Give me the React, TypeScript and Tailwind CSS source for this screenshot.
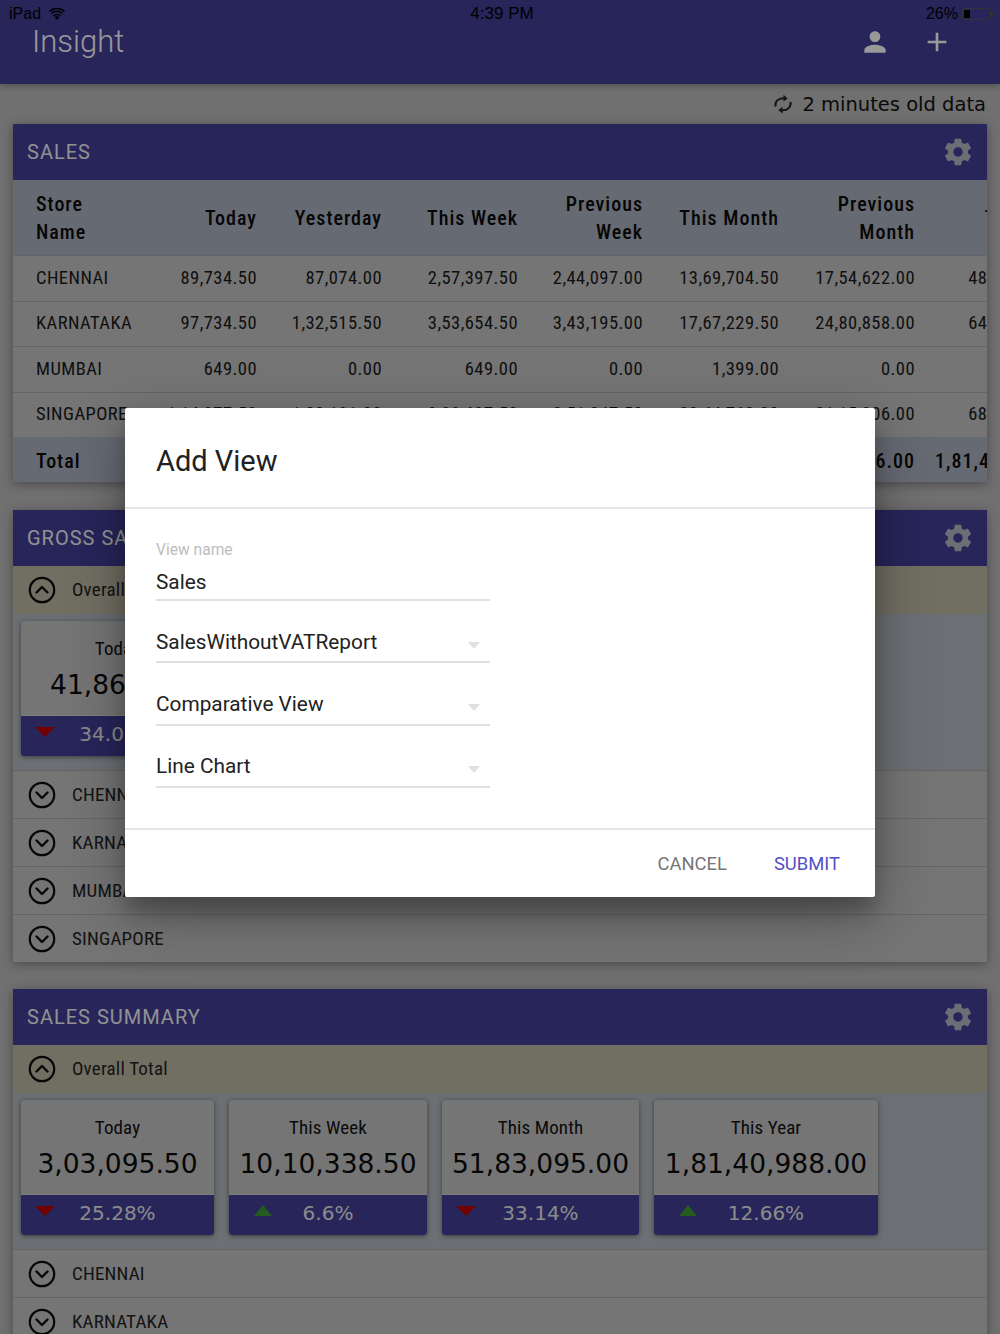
import type React from "react";

const condensed = "font-['Roboto',sans-serif] [font-stretch:75%]";
const dejavu = "font-['DejaVu_Sans',sans-serif]";

const tableCols = "grid grid-cols-[144px_100px_125px_136px_125px_136px_136px_153px]";

const tableHead = [
	"Store\nName",
	"Today",
	"Yesterday",
	"This Week",
	"Previous\nWeek",
	"This Month",
	"Previous\nMonth",
	"This Year",
];

const tableRows = [
	["CHENNAI", "89,734.50", "87,074.00", "2,57,397.50", "2,44,097.00", "13,69,704.50", "17,54,622.00", "48,03,214.00"],
	["KARNATAKA", "97,734.50", "1,32,515.50", "3,53,654.50", "3,43,195.00", "17,67,229.50", "24,80,858.00", "64,71,022.00"],
	["MUMBAI", "649.00", "0.00", "649.00", "0.00", "1,399.00", "0.00", "1,399.00"],
	["SINGAPORE", "1,14,977.50", "1,00,181.00", "3,98,637.50", "2,51,247.50", "20,44,762.00", "21,15,306.00", "68,65,353.00"],
];

const tableTotal = ["Total", "3,03,095.50", "3,19,770.50", "10,10,338.50", "8,38,539.50", "51,83,095.00", "63,50,786.00", "1,81,40,988.00"];

const summaryTiles = [
	{ label: "Today", value: "3,03,095.50", change: "25.28%", up: false },
	{ label: "This Week", value: "10,10,338.50", change: "6.6%", up: true },
	{ label: "This Month", value: "51,83,095.00", change: "33.14%", up: false },
	{ label: "This Year", value: "1,81,40,988.00", change: "12.66%", up: true },
];

const GearIcon = () => (
	<svg viewBox="0 0 24 24" className="h-8 w-8 fill-[#b2b7c3]">
		<path d="M19.43 12.98c.04-.32.07-.64.07-.98s-.03-.66-.07-.98l2.11-1.65c.19-.15.24-.42.12-.64l-2-3.46c-.12-.22-.39-.3-.61-.22l-2.49 1c-.52-.4-1.08-.73-1.69-.98l-.38-2.65C14.46 2.18 14.25 2 14 2h-4c-.25 0-.46.18-.49.42l-.38 2.65c-.61.25-1.17.59-1.69.98l-2.49-1c-.23-.09-.49 0-.61.22l-2 3.46c-.13.22-.07.49.12.64l2.11 1.65c-.04.32-.07.65-.07.98s.03.66.07.98l-2.11 1.65c-.19.15-.24.42-.12.64l2 3.46c.12.22.39.3.61.22l2.49-1c.52.4 1.08.73 1.69.98l.38 2.65c.03.24.24.42.49.42h4c.25 0 .46-.18.49-.42l.38-2.65c.61-.25 1.17-.59 1.69-.98l2.49 1c.23.09.49 0 .61-.22l2-3.46c.12-.22.07-.49-.12-.64l-2.11-1.65zM12 15.5c-1.93 0-3.5-1.57-3.5-3.5s1.57-3.5 3.5-3.5 3.5 1.57 3.5 3.5-1.57 3.5-3.5 3.5z" />
	</svg>
);

const ChevronCircle = ({ open }: { open?: boolean }) => (
	<svg viewBox="0 0 28 28" className="h-7 w-7 fill-none stroke-[#0a0a0a]">
		<circle cx="14" cy="14" r="12.2" strokeWidth="2.2" />
		<path
			d={open ? "M8.5 16.5 14 11l5.5 5.5" : "M8.5 11.5 14 17l5.5-5.5"}
			strokeWidth="2.4"
			strokeLinecap="round"
			strokeLinejoin="round"
		/>
	</svg>
);

const SectionHead = ({ title }: { title: string }) => (
	<div className="flex h-14 items-center justify-between pr-[13px] pl-[14px]">
		<span className="font-['Roboto',sans-serif] text-[20px] tracking-[1px] text-[#f2f2f2]">{title}</span>
		<GearIcon />
	</div>
);

const Tile = ({ label, value, change, up, width }: { label: string; value: string; change: string; up: boolean; width: string }) => (
	<div className={`${width} shrink-0 overflow-hidden rounded-[3px] bg-[#c3c3c3] shadow-[0_1px_5px_rgba(0,0,0,0.45)]`}>
		<div className="flex h-[95px] flex-col items-center border-b border-[#d4d4d4] pt-[14px]">
			<span className={`${condensed} text-[19px] leading-[28px] tracking-[0.1px] text-[#111]`}>{label}</span>
			<span className={`${dejavu} mt-[5px] text-[26.5px] leading-[34px] whitespace-nowrap text-[#0a0a0a]`}>{value}</span>
		</div>
		<div className="relative flex h-[40px] items-center justify-center bg-[#413e96] pb-[5px]">
			{up ? (
				<span className="absolute top-[10px] left-[25px] h-0 w-0 border-x-[9px] border-b-[11px] border-x-transparent border-b-[#3c9a35]" />
			) : (
				<span className="absolute top-[11px] left-[14px] h-0 w-0 border-x-[10.5px] border-t-[10px] border-x-transparent border-t-[#c00000]" />
			)}
			<span className={`${dejavu} text-[20px] text-[#e8e8e8]`}>{change}</span>
		</div>
	</div>
);

const RowLine = ({ label, open, tint }: { label: string; open?: boolean; tint?: boolean }) => (
	<div className={`flex h-12 items-center gap-[16px] pl-[15px] ${tint ? "bg-[#bcb7a3]" : "border-t border-[#a8a8a8] bg-[#c3c3c3]"}`}>
		<ChevronCircle open={open} />
		<span className={`${condensed} text-[19px] tracking-[0.2px] text-[#222] ${tint ? "" : "pt-[2px]"}`}>{label}</span>
	</div>
);

const SelectField = ({ value }: { value: string }) => (
	<div className="mt-[20px] flex h-[42.3px] items-center justify-between border-b-2 border-[#e0e0e0] pt-[2px] pr-[10px] text-[20.8px] text-[#222]">
		<span>{value}</span>
		<span className="mt-[6px] h-0 w-0 border-x-[6.5px] border-t-[7px] border-x-transparent border-t-[#e0e0e0]" />
	</div>
);

const App: React.FC = () => {
	return (
		<div className="relative h-[1334px] overflow-hidden bg-[#bbbbbb]">
			{/* App bar */}
			<header className="relative h-[84px] bg-[#413e96] pt-[10px] shadow-[0_2px_6px_rgba(0,0,0,0.3)]">
				<div className="flex h-16 items-center justify-between pr-[47px] pl-8">
					<span className="font-['Roboto',sans-serif] text-[31px] font-light text-white">Insight</span>
					<div className="flex items-center gap-[30px]">
						<svg viewBox="0 0 24 24" className="h-8 w-8 fill-white">
							<path d="M12 12c2.21 0 4-1.79 4-4s-1.79-4-4-4-4 1.79-4 4 1.79 4 4 4zm0 2c-2.67 0-8 1.34-8 4v2h16v-2c0-2.66-5.33-4-8-4z" />
						</svg>
						<svg viewBox="0 0 24 24" className="h-8 w-8 fill-white">
							<path d="M19 13h-6v6h-2v-6H5v-2h6V5h2v6h6v2z" />
						</svg>
					</div>
				</div>
			</header>

			{/* Refresh state */}
			<div className={`${dejavu} flex h-10 items-center justify-end gap-[9px] pr-[14px] text-[19.5px] text-[#111]`}>
				<svg viewBox="0 0 20 20" className="h-5 w-5 fill-none stroke-[#222]" strokeWidth="2">
					<path d="M2.5 12.5C1.6 7.6 5.4 3.9 11 4.2" />
					<path d="M17.5 8C18.4 12.9 14.6 16.6 9 16.3" />
					<path d="M10.5 .8 14.6 4.4 10.5 7.6Z" className="fill-[#222] stroke-none" />
					<path d="M9.5 12.9 5.4 16.1 9.5 19.7Z" className="fill-[#222] stroke-none" />
				</svg>
				<span className="pt-[2px]">2 minutes old data</span>
			</div>

			<main className="mx-[13px]">
				{/* Sales table */}
				<section className="mb-[28px] overflow-hidden bg-[#c3c3c3] shadow-[0_2px_10px_rgba(0,0,0,0.35)]">
					<div className="bg-[#413e96]">
						<SectionHead title="SALES" />
					</div>
					<div className={`${tableCols} ${condensed} h-[75px] items-center bg-[#aab1c0] text-[20px] leading-[28px] font-medium tracking-[1px] whitespace-pre-line text-[#0a0a0a]`}>
						{tableHead.map((cell, i) => (
							<span key={cell} className={i === 0 ? "pl-[23px]" : "text-right whitespace-pre-line"}>
								{cell}
							</span>
						))}
					</div>
					{tableRows.map((row) => (
						<div key={row[0]} className={`${tableCols} ${condensed} h-[45.5px] items-center border-t border-[#a8a8a8] pt-[1px] text-[18.5px] tracking-[0.45px] whitespace-nowrap text-[#1a1a1a]`}>
							{row.map((cell, i) => (
								<span key={i} className={i === 0 ? "pl-[23px]" : "text-right"}>
									{cell}
								</span>
							))}
						</div>
					))}
					<div className={`${tableCols} ${condensed} h-[45px] items-center bg-[#aab1c0] pt-[2px] text-[20px] font-medium tracking-[1px] whitespace-nowrap text-[#0a0a0a]`}>
						{tableTotal.map((cell, i) => (
							<span key={i} className={i === 0 ? "pl-[23px]" : "text-right"}>
								{cell}
							</span>
						))}
					</div>
				</section>

				{/* Gross sales */}
				<section className="mb-[27px] bg-[#c3c3c3] shadow-[0_2px_10px_rgba(0,0,0,0.35)]">
					<div className="bg-[#413e96]">
						<SectionHead title="GROSS SALES" />
					</div>
					<RowLine label="Overall Total" open tint />
					<div className="flex h-[156px] items-start gap-[15px] bg-[#b4bbc1] pt-[7px] pl-2">
						<Tile label="Today" value="41,861.50" change="34.06%" up={false} width="w-[193px]" />
					</div>
					<RowLine label="CHENNAI" />
					<RowLine label="KARNATAKA" />
					<RowLine label="MUMBAI" />
					<RowLine label="SINGAPORE" />
				</section>

				{/* Sales summary */}
				<section className="bg-[#c3c3c3] shadow-[0_2px_10px_rgba(0,0,0,0.35)]">
					<div className="bg-[#413e96]">
						<SectionHead title="SALES SUMMARY" />
					</div>
					<RowLine label="Overall Total" open tint />
					<div className="flex h-[156px] items-start gap-[15px] bg-[#b4bbc1] pt-[7px] pl-2">
						<Tile {...summaryTiles[0]} width="w-[193px]" />
						<Tile {...summaryTiles[1]} width="w-[198px]" />
						<Tile {...summaryTiles[2]} width="w-[197px]" />
						<Tile {...summaryTiles[3]} width="w-[224px]" />
					</div>
					<RowLine label="CHENNAI" />
					<RowLine label="KARNATAKA" />
				</section>
			</main>

			{/* Dim layer */}
			<div className="absolute inset-0 bg-black/40" />

			{/* iOS status bar */}
			<div className="absolute inset-x-0 top-0 flex h-[27px] items-center justify-between pr-[7px] pl-[9px] font-['Liberation_Sans',sans-serif] text-[17px] text-black">
				<div className="flex w-[200px] items-center gap-2">
					<span className="text-[16px]">iPad</span>
					<svg viewBox="0 0 16 12" className="h-3 w-4 fill-black">
						<path d="M8 12 5.6 9.2a3.6 3.6 0 0 1 4.8 0z" />
						<path d="M3.9 7.3A6.2 6.2 0 0 1 12.1 7.3L11.1 8.5a4.7 4.7 0 0 0-6.2 0z" />
						<path d="M1.8 4.9a9.3 9.3 0 0 1 12.4 0l-1 1.2a7.8 7.8 0 0 0-10.4 0z" />
						<path d="M0 2.7a12 12 0 0 1 16 0l-1 1.2a10.5 10.5 0 0 0-14 0z" />
					</svg>
				</div>
				<span className="ml-[2px]">4:39 PM</span>
				<div className="flex w-[200px] items-center justify-end gap-1">
					<span className="text-[16px]">26%</span>
					<div className="flex items-center">
						<div className="h-[12px] w-[29px] rounded-[2px] border border-[#333] p-px">
							<div className="h-full w-[6px] bg-black" />
						</div>
						<div className="h-1 w-[2px] rounded-r-[1px] bg-[#333]" />
					</div>
				</div>
			</div>

			{/* Add View dialog */}
			<div className="absolute top-[408px] left-[125px] h-[489px] w-[750px] rounded-[2px] bg-white font-['Roboto',sans-serif] shadow-[0_19px_60px_rgba(0,0,0,0.3),0_15px_20px_rgba(0,0,0,0.22)]">
				<div className="flex h-[101px] items-center border-b-2 border-[#e6e6e6] pt-[8px] pl-[31px] text-[29px] text-[#212121]">Add View</div>
				<div className="h-[321px] border-b-2 border-[#e6e6e6] pt-[31px] pl-[31px]">
					<div className="w-[334px]">
						<div className="text-[15.6px] leading-[20px] text-[#bdbdbd]">View name</div>
						<div className="flex h-[41px] items-center border-b-2 border-[#e0e0e0] pt-[7px] text-[20.8px] text-[#222]">Sales</div>
						<SelectField value="SalesWithoutVATReport" />
						<SelectField value="Comparative View" />
						<SelectField value="Line Chart" />
					</div>
				</div>
				<div className="flex h-[67px] items-center justify-end gap-[47px] pr-[35px] text-[18.4px]">
					<span className="text-[#757575]">CANCEL</span>
					<span className="text-[#5450c4]">SUBMIT</span>
				</div>
			</div>
		</div>
	);
};

export default App;
